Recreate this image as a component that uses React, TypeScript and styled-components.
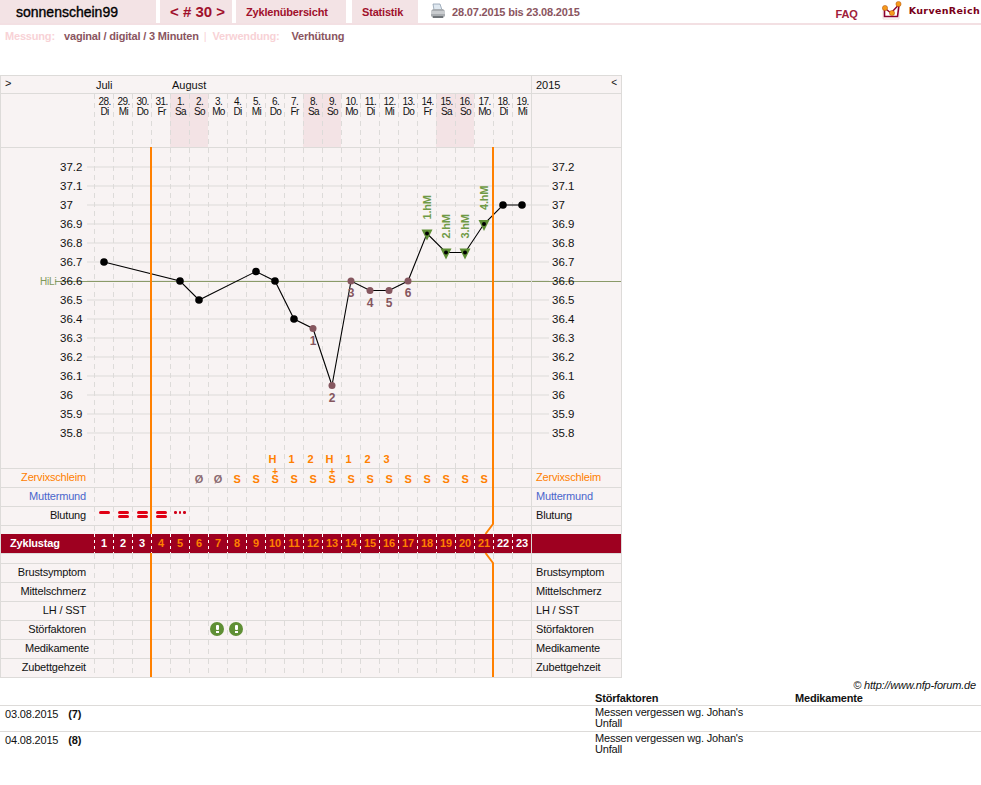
import React from "react";
import styled, { createGlobalStyle } from "styled-components";

const ROSE = "#85565e";
const ORANGE = "#ff8000";
const GREEN = "#5f8f35";
const LINE = "#dddbd9";

const GlobalStyle = createGlobalStyle`
  body {
    margin: 0;
    background: white;
    font-family: "Liberation Sans", Arial, sans-serif;
    font-size: 11px;
    letter-spacing: -0.18px;
    color: #111;
  }
`;

const TopBar = styled.div`
  height: 25px;
  box-sizing: border-box;
  border-bottom: 2px solid #f3e0e3;
  display: flex;
  align-items: stretch;
  font-weight: bold;
`;

const Tab = styled.div<{ $w: number; $ml?: number }>`
  width: ${(p) => p.$w}px;
  margin-left: ${(p) => p.$ml || 0}px;
  padding-left: 10px;
  box-sizing: border-box;
  background: #f3e3e5;
  color: #a0102c;
  display: flex;
  align-items: center;
`;

const UserTab = styled(Tab)`
  padding-left: 16px;
  color: #000;
  font-size: 14px;
  font-weight: normal;
  letter-spacing: 0;
  -webkit-text-stroke: 0.35px #000;
`;

const CycleTab = styled(Tab)`
  font-size: 15px;
  letter-spacing: 0;
`;

const PrintBox = styled.div`
  margin-left: 12px;
  display: flex;
  align-items: center;
  gap: 6px;
  color: #8a5560;
`;

const TopRight = styled.div`
  margin-left: auto;
  display: flex;
  align-items: center;
`;

const Faq = styled.span`
  color: #a0203a;
  margin-right: 24px;
  padding-top: 5px;
`;

const Brand = styled.span`
  font-family: "DejaVu Sans", sans-serif;
  font-size: 9.5px;
  color: #7a0018;
  letter-spacing: 0.35px;
  margin: 0 1px 3px 7px;
`;

const InfoLine = styled.div`
  height: 50px;
  padding: 5px 0 0 5px;
  box-sizing: border-box;
  font-weight: bold;
  display: flex;
  color: #8a5560;
`;

const InfoKey = styled.span<{ $w: number }>`
  color: #f8d2d6;
  width: ${(p) => p.$w}px;
`;

const InfoSep = styled.span`
  color: #f8d2d6;
  font-weight: normal;
  margin: 0 6px 0 5px;
`;

const ChartTable = styled.div`
  position: relative;
  width: 622px;
  box-sizing: border-box;
  border: 1px solid ${LINE};
  border-bottom: none;
  background: #f8f3f3;
`;

const Row = styled.div<{ $h: number; $flat?: boolean }>`
  display: grid;
  grid-template-columns: 93px repeat(23, 19px) 90px;
  height: ${(p) => p.$h}px;
  box-sizing: border-box;
  border-bottom: ${(p) => (p.$flat ? "none" : `1px solid ${LINE}`)};
`;

const GapRow = styled(Row)`
  border-top: 1px solid ${LINE};
`;

const RowLabel = styled.div<{ $color?: string; $pr?: number }>`
  text-align: right;
  padding: 2px ${(p) => p.$pr ?? 8}px 0 0;
  color: ${(p) => p.$color || "#111"};
`;

const SideCell = styled.div<{ $color?: string }>`
  border-left: 1px solid ${LINE};
  padding: 2px 0 0 4px;
  color: ${(p) => p.$color || "#111"};
  display: flex;
  justify-content: space-between;
`;

const DayCell = styled.div<{ $weekend?: boolean }>`
  background-color: ${(p) => (p.$weekend ? "#f3e3e5" : "transparent")};
  background-image: linear-gradient(${LINE} 5px, transparent 5px);
  background-size: 1px 9px;
  background-repeat: repeat-y;
  text-align: center;
  position: relative;
`;

const MonthCell = styled.div<{ $col: number }>`
  grid-column: ${(p) => p.$col};
  grid-row: 1;
  padding: 3px 0 0 2px;
  white-space: nowrap;
  letter-spacing: 0;
`;

const Toggle = styled.div`
  grid-column: 1;
  grid-row: 1;
  padding: 1px 0 0 4px;
`;

const MonthSide = styled(SideCell)`
  grid-column: 25;
  grid-row: 1;
  padding: 3px 4px 0 4px;
  letter-spacing: 0;
`;

const SmallArrow = styled.span`
  margin-top: -2px;
  font-size: 10px;
`;

const DateText = styled.div`
  font-size: 10px;
  line-height: 10px;
  letter-spacing: -0.6px;
  padding: 3px 0 0 2px;
`;

const ChartRow = styled(Row)`
  position: relative;
`;

const TempColumn = styled.div<{ $pad: number; $side?: boolean }>`
  padding: 10px 0 0 ${(p) => p.$pad}px;
  border-left: ${(p) => (p.$side ? `1px solid ${LINE}` : "none")};
  position: relative;
  z-index: 1;
`;

const TempLabel = styled.div`
  height: 19px;
  line-height: 19px;
  font-size: 11.5px;
  letter-spacing: 0;
`;

const PlotArea = styled.div`
  grid-column: 2 / span 23;
  display: grid;
  grid-template-columns: repeat(23, 19px);
`;

const ChartSvg = styled.svg`
  position: absolute;
  left: 0;
  top: 0;
`;

const MucusMark = styled.span<{ $color: string }>`
  display: block;
  padding: 4px 0 0 1px;
  color: ${(p) => p.$color};
  font-weight: bold;
  font-size: 11px;
  line-height: 13px;
`;

const PlusMark = styled.span`
  position: absolute;
  left: 1px;
  right: 0;
  top: -1px;
  color: ${ORANGE};
  font-size: 10px;
  font-weight: bold;
  line-height: 7px;
`;

const BleedStack = styled.div`
  display: flex;
  flex-direction: column;
  align-items: center;
  gap: 1px;
  padding: 4px 0 0 1px;
`;

const BleedBar = styled.span`
  width: 11px;
  height: 3px;
  border-radius: 2px;
  background: #e00014;
`;

const BleedDots = styled.div`
  display: flex;
  justify-content: center;
  gap: 2px;
  padding: 4px 0 0 1px;
`;

const BleedDot = styled.span`
  width: 2.5px;
  height: 2.5px;
  border-radius: 50%;
  background: #d00018;
`;

const CycleRow = styled(Row)`
  background: #9e0020;
  position: relative;
  z-index: 2;
  color: white;
  font-weight: bold;
`;

const CycleLabel = styled.div`
  padding: 3px 0 0 9px;
`;

const CycleCell = styled.div<{ $fertile: boolean }>`
  color: ${(p) => (p.$fertile ? ORANGE : "white")};
  background-image: linear-gradient(white 3px, transparent 3px);
  background-size: 1px 6px;
  background-repeat: repeat-y;
  text-align: center;
  padding: 3px 0 0 1px;
`;

const CycleSide = styled.div`
  border-left: 1px solid ${LINE};
`;

const AlertIcon = styled.span`
  position: absolute;
  left: 2px;
  top: 1px;
  width: 14px;
  height: 14px;
  border-radius: 50%;
  background: ${GREEN};
  display: flex;
  flex-direction: column;
  align-items: center;
  padding-top: 3px;
  box-sizing: border-box;
  gap: 1px;
  &::before {
    content: "";
    width: 3px;
    height: 5px;
    border-radius: 1px;
    background: white;
  }
  &::after {
    content: "";
    width: 3px;
    height: 2px;
    background: white;
  }
`;

const Credit = styled.div`
  text-align: right;
  font-style: italic;
  padding: 1px 5px 0 0;
  height: 12px;
  line-height: 12px;
`;

const NoteGrid = styled.div`
  display: grid;
  grid-template-columns: 595px 200px 1fr;
`;

const NoteHead = styled.div`
  font-weight: bold;
  line-height: 12px;
  height: 15px;
  padding-top: 1px;
  box-sizing: border-box;
  border-bottom: 1px solid ${LINE};
`;

const NoteCell = styled.div`
  height: 25px;
  box-sizing: border-box;
  padding-top: 1px;
  line-height: 11px;
  width: 160px;
`;

const NoteDate = styled.div`
  height: 25px;
  box-sizing: border-box;
  padding: 2px 0 0 5px;
  line-height: 12px;
  display: flex;
  gap: 10px;
`;

const NoteBlank = styled.div`
  height: 25px;
`;

const NoteRule = styled.div`
  grid-column: 1 / -1;
  height: 0;
  border-top: 1px solid ${LINE};
`;

const Bold = styled.b`
  font-weight: bold;
`;

const names = ["Di", "Mi", "Do", "Fr", "Sa", "So", "Mo"];
const days = Array.from({ length: 23 }, (_, i) => {
  const date = i < 4 ? 28 + i : i - 3;
  const name = names[i % 7];
  return { n: i + 1, date, name, weekend: name === "Sa" || name === "So" };
});

const temps = ["37.2", "37.1", "37", "36.9", "36.8", "36.7", "36.6", "36.5", "36.4", "36.3", "36.2", "36.1", "36", "35.9", "35.8"];

const px = (day: number) => 94.5 + 19 * (day - 0.5);
const py = (t: number) => 167 + (37.2 - t) * 190;

const points = [
  { d: 1, t: 36.7 },
  { d: 5, t: 36.6 },
  { d: 6, t: 36.5 },
  { d: 9, t: 36.65 },
  { d: 10, t: 36.6 },
  { d: 11, t: 36.4 },
  { d: 12, t: 36.35, low: "1" },
  { d: 13, t: 36.05, low: "2" },
  { d: 14, t: 36.6, low: "3" },
  { d: 15, t: 36.55, low: "4" },
  { d: 16, t: 36.55, low: "5" },
  { d: 17, t: 36.6, low: "6" },
  { d: 18, t: 36.85, high: "1.hM" },
  { d: 19, t: 36.75, high: "2.hM" },
  { d: 20, t: 36.75, high: "3.hM" },
  { d: 21, t: 36.9, high: "4.hM" },
  { d: 22, t: 37 },
  { d: 23, t: 37 },
];

const peakMarks: Record<number, string> = { 10: "H", 11: "1", 12: "2", 13: "H", 14: "1", 15: "2", 16: "3" };

const blankCells = () => days.map((d) => <DayCell key={d.n} />);

const Chart = () => (
  <ChartSvg width="620" height="320" viewBox="1 148 620 320">
    {temps.map((t) => (
      <line key={t} x1="87" x2="549" y1={py(+t)} y2={py(+t)} stroke={LINE} />
    ))}
    <line x1="55" x2="621" y1="281.5" y2="281.5" stroke="#8a9a68" />
    <text x="40" y="285" fontSize="10" fill="#7f9a5a">
      HiLi
    </text>
    <polyline
      fill="none"
      stroke="#000"
      strokeWidth="1.1"
      points={points.map((p) => `${px(p.d)},${py(p.t)}`).join(" ")}
    />
    {points.map((p) => {
      const x = px(p.d);
      const y = py(p.t);
      if (p.high) {
        return (
          <g key={p.d}>
            <polygon points={`${x - 5.5},${y - 4} ${x + 5.5},${y - 4} ${x},${y + 7}`} fill={GREEN} />
            <circle cx={x} cy={y} r="2" fill="#000" />
            <text
              transform={`translate(${x + 4},${y - 14}) rotate(-90)`}
              fontSize="11"
              fontWeight="bold"
              fill="#6f9a45"
            >
              {p.high}
            </text>
          </g>
        );
      }
      if (p.low) {
        return (
          <g key={p.d}>
            <circle cx={x} cy={y} r="3.5" fill={ROSE} />
            <text x={x} y={y + 16} fontSize="12" fontWeight="bold" fill={ROSE} textAnchor="middle">
              {p.low}
            </text>
          </g>
        );
      }
      return <circle key={p.d} cx={x} cy={y} r="3.8" fill="#000" />;
    })}
    {Object.entries(peakMarks).map(([d, m]) => (
      <text key={d} x={px(+d) - 2.5} y="463" fontSize="11" fontWeight="bold" fill={ORANGE} textAnchor="middle">
        {m}
      </text>
    ))}
  </ChartSvg>
);

const CycleLines = () => (
  <ChartSvg width="620" height="602" viewBox="1 76 620 602">
    <path d="M151 147V677" stroke={ORANGE} strokeWidth="2" fill="none" />
    <path d="M493 147V524L485.5 534M485.5 553L493 563V677" stroke={ORANGE} strokeWidth="2" fill="none" />
  </ChartSvg>
);

const PrinterIcon = () => (
  <svg width="16" height="17" viewBox="0 0 16 17">
    <path d="M3 1h7l2 6H4z" fill="#dfe8f0" stroke="#8fa0b0" strokeWidth="0.8" />
    <path d="M1 8l2-2h10l2 2v5l-2 2H3l-2-2z" fill="#a9adb1" />
    <path d="M1 8h14v3H1z" fill="#c9cccf" />
    <path d="M3 13h10v2H3z" fill="#6f7478" />
  </svg>
);

const BrandLogo = () => (
  <svg width="20" height="21" viewBox="0 0 20 21">
    <path d="M1 7v11h16V4" fill="none" stroke="#e8d8da" strokeWidth="0.8" />
    <path d="M2.5 7V15.5H15.5L17 4" fill="#fff" stroke="#8a0030" strokeWidth="1.6" />
    <path d="M2.5 7L9 12L16.5 4" fill="none" stroke="#8a0030" strokeWidth="1.4" />
    <circle cx="3" cy="7" r="2.6" fill="#f59a1b" stroke="#b05010" strokeWidth="0.5" />
    <circle cx="10" cy="12" r="2.6" fill="#f59a1b" stroke="#b05010" strokeWidth="0.5" />
    <circle cx="16.5" cy="3" r="2.6" fill="#f59a1b" stroke="#b05010" strokeWidth="0.5" />
  </svg>
);

const App = () => {
  const labelRows = (rows: string[]) =>
    rows.map((name) => (
      <Row $h={19} key={name}>
        <RowLabel $pr={name === "Medikamente" ? 5 : 8}>{name}</RowLabel>
        {days.map((d) => (
          <DayCell key={d.n}>{name === "Störfaktoren" && (d.n === 7 || d.n === 8) && <AlertIcon />}</DayCell>
        ))}
        <SideCell>{name}</SideCell>
      </Row>
    ));

  return (
    <>
      <GlobalStyle />
      <TopBar>
        <UserTab $w={156}>sonnenschein99</UserTab>
        <CycleTab $w={72} $ml={4}>
          &lt; # 30 &gt;
        </CycleTab>
        <Tab $w={110} $ml={4}>
          Zyklenübersicht
        </Tab>
        <Tab $w={66} $ml={6}>
          Statistik
        </Tab>
        <PrintBox>
          <PrinterIcon />
          28.07.2015 bis 23.08.2015
        </PrintBox>
        <TopRight>
          <Faq>FAQ</Faq>
          <BrandLogo />
          <Brand>KurvenReich</Brand>
        </TopRight>
      </TopBar>
      <InfoLine>
        <InfoKey $w={59}>Messung:</InfoKey>
        vaginal / digital / 3 Minuten
        <InfoSep>|</InfoSep>
        <InfoKey $w={79}>Verwendung:</InfoKey>
        Verhütung
      </InfoLine>
      <ChartTable>
        <Row $h={18}>
          <Toggle>&gt;</Toggle>
          <MonthCell $col={2}>Juli</MonthCell>
          <MonthCell $col={6}>August</MonthCell>
          <MonthSide>
            2015
            <SmallArrow>&lt;</SmallArrow>
          </MonthSide>
        </Row>
        <Row $h={54}>
          <div />
          {days.map((d) => (
            <DayCell key={d.n} $weekend={d.weekend}>
              <DateText>
                {d.date}.
                <br />
                {d.name}
              </DateText>
            </DayCell>
          ))}
          <SideCell />
        </Row>
        <ChartRow $h={321}>
          <TempColumn $pad={59}>
            {temps.map((t) => (
              <TempLabel key={t}>{t}</TempLabel>
            ))}
          </TempColumn>
          <PlotArea>{blankCells()}</PlotArea>
          <TempColumn $pad={20} $side>
            {temps.map((t) => (
              <TempLabel key={t}>{t}</TempLabel>
            ))}
          </TempColumn>
          <Chart />
        </ChartRow>
        <Row $h={19}>
          <RowLabel $color={ORANGE}>Zervixschleim</RowLabel>
          {days.map((d) => (
            <DayCell key={d.n}>
              {(d.n === 10 || d.n === 13) && <PlusMark>+</PlusMark>}
              {(d.n === 6 || d.n === 7) && <MucusMark $color="#8a6a70">Ø</MucusMark>}
              {d.n >= 8 && d.n <= 21 && <MucusMark $color={ORANGE}>S</MucusMark>}
            </DayCell>
          ))}
          <SideCell $color={ORANGE}>Zervixschleim</SideCell>
        </Row>
        <Row $h={19}>
          <RowLabel $color="#4a66cc">Muttermund</RowLabel>
          {blankCells()}
          <SideCell $color="#4a66cc">Muttermund</SideCell>
        </Row>
        <Row $h={19}>
          <RowLabel>Blutung</RowLabel>
          {days.map((d) => (
            <DayCell key={d.n}>
              {d.n === 1 && (
                <BleedStack>
                  <BleedBar />
                </BleedStack>
              )}
              {d.n >= 2 && d.n <= 4 && (
                <BleedStack>
                  <BleedBar />
                  <BleedBar />
                </BleedStack>
              )}
              {d.n === 5 && (
                <BleedDots>
                  <BleedDot />
                  <BleedDot />
                  <BleedDot />
                </BleedDots>
              )}
            </DayCell>
          ))}
          <SideCell>Blutung</SideCell>
        </Row>
        <Row $h={8} $flat>
          <div />
          {blankCells()}
          <SideCell />
        </Row>
        <CycleRow $h={19} $flat>
          <CycleLabel>Zyklustag</CycleLabel>
          {days.map((d) => (
            <CycleCell key={d.n} $fertile={d.n >= 4 && d.n <= 21}>
              {d.n}
            </CycleCell>
          ))}
          <CycleSide />
        </CycleRow>
        <GapRow $h={11}>
          <div />
          {blankCells()}
          <SideCell />
        </GapRow>
        {labelRows(["Brustsymptom", "Mittelschmerz", "LH / SST", "Störfaktoren", "Medikamente", "Zubettgehzeit"])}
        <CycleLines />
      </ChartTable>
      <Credit>© http://www.nfp-forum.de</Credit>
      <NoteGrid>
        <NoteHead />
        <NoteHead>Störfaktoren</NoteHead>
        <NoteHead>Medikamente</NoteHead>
        <NoteDate>
          03.08.2015 <Bold>(7)</Bold>
        </NoteDate>
        <NoteCell>Messen vergessen wg. Johan's Unfall</NoteCell>
        <NoteBlank />
        <NoteRule />
        <NoteDate>
          04.08.2015 <Bold>(8)</Bold>
        </NoteDate>
        <NoteCell>Messen vergessen wg. Johan's Unfall</NoteCell>
        <NoteBlank />
      </NoteGrid>
    </>
  );
};

export default App;
